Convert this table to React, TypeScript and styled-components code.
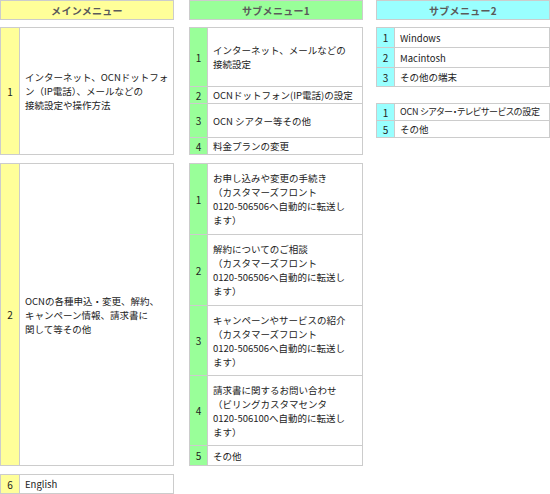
import React from "react";
import styled, { createGlobalStyle } from "styled-components";

type Tone = "yellow" | "green" | "cyan";

const toneColor: Record<Tone, string> = {
  yellow: "#ffff99",
  green: "#99ff99",
  cyan: "#99ffff",
};

const GlobalStyle = createGlobalStyle`
  html, body {
    margin: 0;
    padding: 0;
    background: #ffffff;
  }
  body {
    font-family: "Noto Sans CJK JP", "Noto Sans", sans-serif;
    font-size: 10px;
    color: #222222;
  }
`;

const Page = styled.div`
  display: grid;
  grid-template-columns: 189px 187px 174px;
  align-items: start;
  width: 550px;
  height: 494px;
`;

const Column = styled.div`
  display: flex;
  flex-direction: column;
  width: 174px;
`;

const Header = styled.div<{ $tone: Tone }>`
  box-sizing: border-box;
  height: 20px;
  border: 1px solid #cccccc;
  background: ${(p) => toneColor[p.$tone]};
  display: flex;
  align-items: center;
  justify-content: center;
  font-size: 10px;
  font-weight: bold;
  color: #5a5a5a;
  letter-spacing: 0.3px;
`;

const Table = styled.div<{ $gap: number }>`
  margin-top: ${(p) => p.$gap}px;
  display: flex;
  flex-direction: column;
  gap: 1px;
  padding: 1px;
  background: #cccccc;
`;

const Row = styled.div<{ $h: number; $num: number }>`
  display: grid;
  grid-template-columns: ${(p) => p.$num}px 1fr;
  gap: 1px;
  height: ${(p) => p.$h}px;
`;

const NumCell = styled.div<{ $tone: Tone }>`
  background: ${(p) => toneColor[p.$tone]};
  display: flex;
  align-items: center;
  justify-content: center;
  font-size: 10px;
  color: #222222;
`;

const TextCell = styled.div<{ $tight?: boolean }>`
  background: #ffffff;
  display: flex;
  align-items: center;
  padding-left: 5px;
  line-height: 14px;
  white-space: nowrap;
  overflow: hidden;
  letter-spacing: ${(p) => (p.$tight ? "-0.2px" : "0")};
  font-size: ${(p) => (p.$tight ? "9px" : "9.5px")};
  font-feature-settings: ${(p) => (p.$tight ? '"palt"' : "normal")};
`;

const Text = styled.span`
  display: block;
`;

type RowData = { n: string; h: number; lines: string[]; tight?: boolean };

const Lines = ({ lines }: { lines: string[] }) => (
  <Text>
    {lines.map((l, i) => (
      <React.Fragment key={i}>
        {i > 0 && <br />}
        {l}
      </React.Fragment>
    ))}
  </Text>
);

const MenuTable = ({
  rows,
  tone,
  num,
  gap,
}: {
  rows: RowData[];
  tone: Tone;
  num: number;
  gap: number;
}) => (
  <Table $gap={gap}>
    {rows.map((r, i) => (
      <Row key={i} $h={r.h} $num={num}>
        <NumCell $tone={tone}>{r.n}</NumCell>
        <TextCell $tight={r.tight}>
          <Lines lines={r.lines} />
        </TextCell>
      </Row>
    ))}
  </Table>
);

const transferLines = (first: string, center: string, tel: string) => [
  first,
  `（${center}`,
  `${tel}へ自動的に転送し`,
  "ます）",
];

export default function App() {
  return (
    <>
      <GlobalStyle />
      <Page>
        <Column>
          <Header $tone="yellow">メインメニュー</Header>
          <MenuTable
            tone="yellow"
            num={18}
            gap={7}
            rows={[
              {
                n: "1",
                h: 126,
                lines: [
                  "インターネット、OCNドットフォ",
                  "ン（IP電話）、メールなどの",
                  "接続設定や操作方法",
                ],
              },
            ]}
          />
          <MenuTable
            tone="yellow"
            num={18}
            gap={8}
            rows={[
              {
                n: "2",
                h: 301,
                lines: [
                  "OCNの各種申込・変更、解約、",
                  "キャンペーン情報、請求書に",
                  "関して等その他",
                ],
              },
            ]}
          />
          <MenuTable
            tone="yellow"
            num={18}
            gap={8}
            rows={[{ n: "6", h: 18, lines: ["English"] }]}
          />
        </Column>

        <Column>
          <Header $tone="green">サブメニュー1</Header>
          <MenuTable
            tone="green"
            num={17}
            gap={7}
            rows={[
              { n: "1", h: 58, lines: ["インターネット、メールなどの", "接続設定"] },
              { n: "2", h: 16, lines: ["OCNドットフォン(IP電話)の設定"] },
              { n: "3", h: 33, lines: ["OCN シアター等その他"] },
              { n: "4", h: 16, lines: ["料金プランの変更"] },
            ]}
          />
          <MenuTable
            tone="green"
            num={17}
            gap={8}
            rows={[
              {
                n: "1",
                h: 70,
                lines: transferLines("お申し込みや変更の手続き", "カスタマーズフロント", "0120-506506"),
              },
              {
                n: "2",
                h: 70,
                lines: transferLines("解約についてのご相談", "カスタマーズフロント", "0120-506506"),
              },
              {
                n: "3",
                h: 69,
                lines: transferLines("キャンペーンやサービスの紹介", "カスタマーズフロント", "0120-506506"),
              },
              {
                n: "4",
                h: 69,
                lines: transferLines("請求書に関するお問い合わせ", "ビリングカスタマセンタ", "0120-506100"),
              },
              { n: "5", h: 19, lines: ["その他"] },
            ]}
          />
        </Column>

        <Column>
          <Header $tone="cyan">サブメニュー2</Header>
          <MenuTable
            tone="cyan"
            num={17}
            gap={7}
            rows={[
              { n: "1", h: 19, lines: ["Windows"] },
              { n: "2", h: 19, lines: ["Macintosh"] },
              { n: "3", h: 18, lines: ["その他の端末"] },
            ]}
          />
          <MenuTable
            tone="cyan"
            num={17}
            gap={16}
            rows={[
              { n: "1", h: 16, lines: ["OCN シアター・テレビサービスの設定"], tight: true },
              { n: "5", h: 16, lines: ["その他"] },
            ]}
          />
        </Column>
      </Page>
    </>
  );
}
